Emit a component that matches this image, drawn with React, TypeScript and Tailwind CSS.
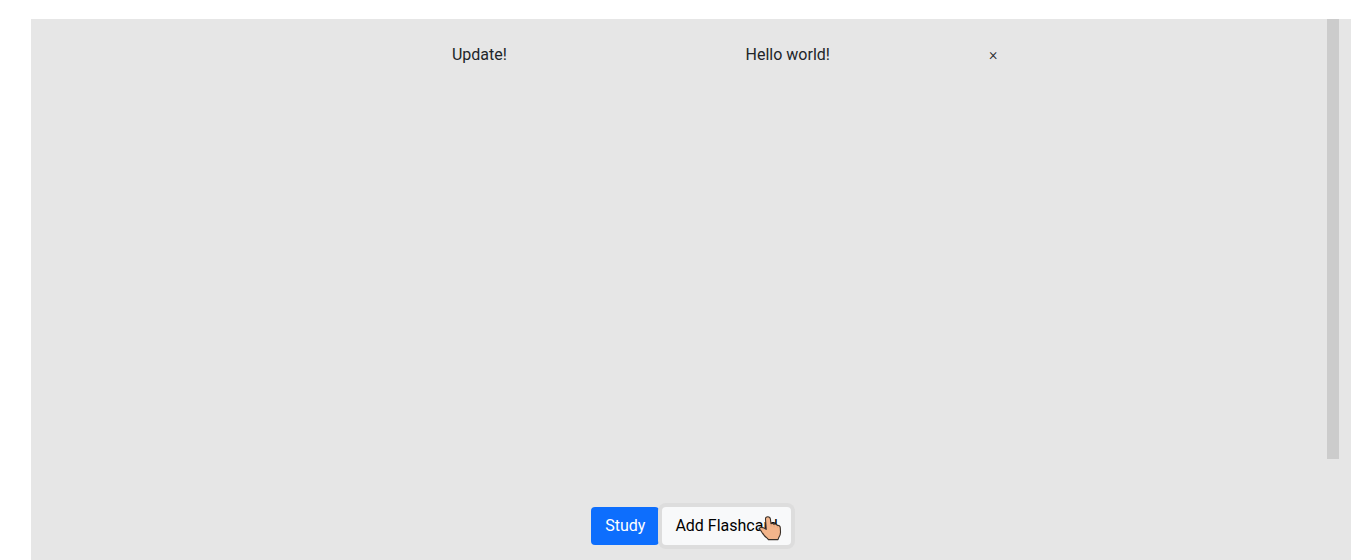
function HandPointer() {
  return (
    <svg
      className="pointer-events-none absolute right-[9px] top-2 h-7 w-6"
      viewBox="0 0 24 28"
      fill="none"
      aria-hidden="true"
    >
      <path
        d="M8.2 13.6L7.5 4.2C7.4 2.6 8.3 1.8 9.8 1.8C11.2 1.8 12.2 2.6 12.4 4L13 8.8C14 8.2 15.4 8.5 16 9.4C17 8.7 18.7 9.1 19.3 10.4C20.8 10.1 22.2 11 22.3 12.8L22.5 16.8C22.6 19.4 21.8 21.4 20.6 22.8L20 24.6H10.4L9.4 23.4C6.8 21.6 4.8 18.9 3.4 16.4C2.6 15.2 1.6 14.4 1 13.6C2 12 4.8 11.6 8.2 14.4Z"
        fill="#f3b58b"
        stroke="#393029"
        strokeWidth="1.1"
        strokeLinejoin="round"
      />
      <path d="M13 9.2L13.1 11.6M16.1 9.9L16.2 12.2M19.3 10.9L19.4 12.8" stroke="#dda078" strokeWidth="0.8" />
    </svg>
  );
}

const cards = [{ front: "Update!", back: "Hello world!" }];

export default function App() {
  return (
    <main className="h-screen overflow-hidden bg-white pl-[31px] pr-[21px] pt-[19px] font-['Roboto',sans-serif] text-base leading-6 text-[#212529]">
      <div className="flex h-full flex-col bg-[#e6e6e6]">
        <section aria-label="Flashcards" className="mr-3 flex flex-1 items-start">
          <ul className="mx-auto w-[55%] pt-6">
            {cards.map((card) => (
              <li key={card.front} className="grid grid-cols-[3fr_3fr_1fr] text-center">
                <span>{card.front}</span>
                <span>{card.back}</span>
                <button type="button" aria-label="Delete flashcard" className="font-light">
                  ×
                </button>
              </li>
            ))}
          </ul>
          <div className="-ml-3 h-[440px] w-3 bg-[#cccccc]" />
        </section>
        <div className="flex shrink-0 justify-center gap-[3px] pb-[15px]">
          <button type="button" className="rounded-sm bg-[#0d6efd] px-3.5 py-[7px] text-white">
            Study
          </button>
          <button
            type="button"
            className="relative rounded-sm bg-[#f8f9fa] px-[13px] py-[7px] text-black ring-4 ring-[#dddddd]"
          >
            Add Flashcard
            <HandPointer />
          </button>
        </div>
      </div>
    </main>
  );
}
